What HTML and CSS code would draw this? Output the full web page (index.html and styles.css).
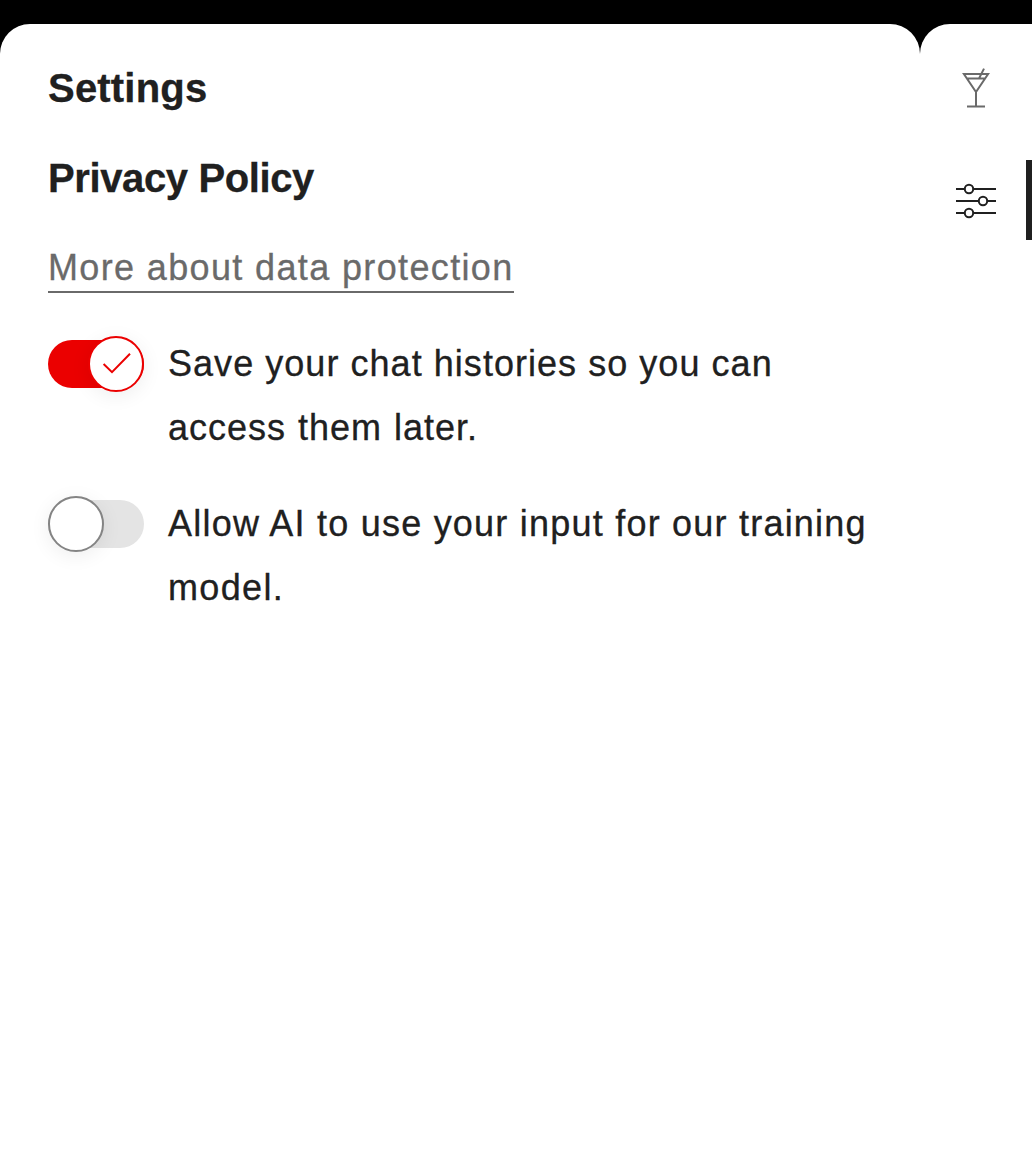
FILE: index.html
```html
<!DOCTYPE html>
<html lang="en">
<head>
<meta charset="utf-8">
<title>Settings</title>
<link rel="stylesheet" href="styles.css">
</head>
<body>
<div class="app">
  <main class="panel">
    <h1 class="heading heading-settings">Settings</h1>
    <h2 class="heading heading-privacy">Privacy Policy</h2>
    <a class="link" href="#">More about data protection</a>
    <div class="options">
      <div class="option">
        <span class="switch switch-on" role="switch" aria-checked="true">
          <span class="knob">
            <svg width="52" height="52" viewBox="0 0 52 52"><path d="M13.6 26 22 34.2 40 15.8"/></svg>
          </span>
        </span>
        <p class="label"><span class="line line-save">Save your chat histories so you can</span> <span class="line line-access">access them later.</span></p>
      </div>
      <div class="option">
        <span class="switch" role="switch" aria-checked="false"><span class="knob"></span></span>
        <p class="label"><span class="line line-allow">Allow AI to use your input for our training</span> <span class="line line-model">model.</span></p>
      </div>
    </div>
  </main>
  <nav class="rail">
    <button class="tab" aria-label="Drinks">
      <svg width="48" height="48" viewBox="0 0 48 48"><path d="M11.9 10h24.2L24 28zM14.9 14.5H33M24 27.8V42.5M15 42.5h18M27 14.5 32 4.6"/></svg>
    </button>
    <button class="tab tab-active" aria-label="Settings">
      <svg width="48" height="48" viewBox="0 0 48 48"><path d="M4 13h8.8M21.2 13H44M4 25h22.8M35.2 25H44M4 37h8.8M21.2 37H44"/><circle cx="17" cy="13" r="4.2"/><circle cx="31" cy="25" r="4.2"/><circle cx="17" cy="37" r="4.2"/></svg>
    </button>
  </nav>
</div>
</body>
</html>
```
FILE: styles.css
```css
* { box-sizing: border-box; }

body {
  margin: 0;
  background: #000;
  color: #202020;
  font-family: "Liberation Sans", Arial, sans-serif;
}

.app {
  display: flex;
  height: 1152px;
  padding-top: 24px;
  overflow: hidden;
}

.panel {
  flex: none;
  width: 920px;
  padding: 40px 0 0 48px;
  background: #fff;
  border-radius: 30px 30px 0 0;
}

.heading {
  margin: 0 0 42px;
  font-size: 40px;
  line-height: 48px;
  font-weight: 700;
  -webkit-text-stroke: 0.3px #202020;
}

.heading-settings { letter-spacing: 0.2px; }
.heading-privacy { letter-spacing: -0.38px; }

.link {
  display: block;
  width: 466px;
  height: 49px;
  color: #6a6a6a;
  border-bottom: 2px solid #6a6a6a;
  font-size: 36px;
  line-height: 48px;
  letter-spacing: 1.36px;
  -webkit-text-stroke: 0.3px #6a6a6a;
  white-space: nowrap;
  text-decoration: none;
}

.options {
  display: flex;
  flex-direction: column;
  gap: 32px;
  margin-top: 39px;
}

.option {
  display: flex;
  gap: 24px;
}

.switch {
  display: flex;
  align-items: center;
  flex: none;
  width: 96px;
  height: 48px;
  margin-top: 8px;
  border-radius: 24px;
  background: #e4e4e4;
}

.switch-on {
  justify-content: flex-end;
  background: #eb0000;
}

.knob {
  flex: none;
  width: 56px;
  height: 56px;
  border: 2px solid #848484;
  border-radius: 50%;
  background: #fff;
  box-shadow: 0 4px 20px rgba(0, 0, 0, 0.07);
}

.switch-on .knob { border-color: #eb0000; }

.knob svg {
  display: block;
  fill: none;
  stroke: #eb0000;
  stroke-width: 2;
}

.label {
  margin: 0;
  font-size: 36px;
  line-height: 64px;
  -webkit-text-stroke: 0.3px #202020;
}

.line {
  display: block;
  white-space: nowrap;
}

.line-save { letter-spacing: 1.04px; }
.line-access { letter-spacing: 1px; word-spacing: 0.9px; }
.line-allow { letter-spacing: 1.22px; }
.line-model { letter-spacing: 1.35px; }

.rail {
  flex: 1;
  display: flex;
  flex-direction: column;
  gap: 32px;
  padding-top: 24px;
  background: #fff;
  border-radius: 30px 0 0 0;
}

.tab {
  display: flex;
  align-items: center;
  width: 112px;
  height: 80px;
  padding: 0 0 0 32px;
  border: 0;
  background: none;
}

.tab-active { border-right: 6px solid #202020; }

.tab svg {
  fill: none;
  stroke: #6a6a6a;
  stroke-width: 2;
}

.tab-active svg { stroke: #202020; }
```
